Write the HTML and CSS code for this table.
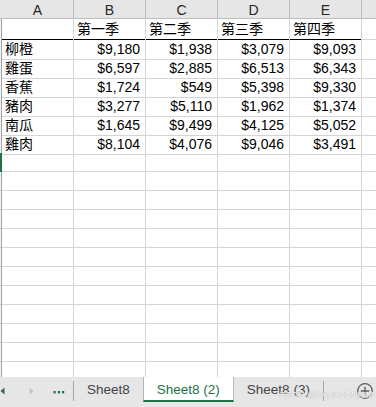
FILE: index.html
```html
<!DOCTYPE html>
<html lang="zh-Hant">
<head>
<meta charset="utf-8">
<link rel="stylesheet" href="styles.css">
</head>
<body>
<div class="book">
  <div class="sheet">
    <div class="row hdr">
      <div class="g"></div><div class="c">A</div><div class="c">B</div><div class="c">C</div><div class="c">D</div><div class="c">E</div><div class="c x"></div>
    </div>
    <div class="row r1">
      <div class="g"></div><div class="c"></div><div class="c">第一季</div><div class="c">第二季</div><div class="c">第三季</div><div class="c">第四季</div><div class="c x"></div>
    </div>
    <div class="row">
      <div class="g"></div><div class="c">柳橙</div><div class="c n">$9,180</div><div class="c n">$1,938</div><div class="c n">$3,079</div><div class="c n">$9,093</div><div class="c x"></div>
    </div>
    <div class="row">
      <div class="g"></div><div class="c">雞蛋</div><div class="c n">$6,597</div><div class="c n">$2,885</div><div class="c n">$6,513</div><div class="c n">$6,343</div><div class="c x"></div>
    </div>
    <div class="row">
      <div class="g"></div><div class="c">香蕉</div><div class="c n">$1,724</div><div class="c n">$549</div><div class="c n">$5,398</div><div class="c n">$9,330</div><div class="c x"></div>
    </div>
    <div class="row">
      <div class="g"></div><div class="c">豬肉</div><div class="c n">$3,277</div><div class="c n">$5,110</div><div class="c n">$1,962</div><div class="c n">$1,374</div><div class="c x"></div>
    </div>
    <div class="row">
      <div class="g"></div><div class="c">南瓜</div><div class="c n">$1,645</div><div class="c n">$9,499</div><div class="c n">$4,125</div><div class="c n">$5,052</div><div class="c x"></div>
    </div>
    <div class="row">
      <div class="g"></div><div class="c">雞肉</div><div class="c n">$8,104</div><div class="c n">$4,076</div><div class="c n">$9,046</div><div class="c n">$3,491</div><div class="c x"></div>
    </div>
    <div class="row sel">
      <div class="g"></div><div class="c"></div><div class="c"></div><div class="c"></div><div class="c"></div><div class="c"></div><div class="c x"></div>
    </div>
    <div class="row">
      <div class="g"></div><div class="c"></div><div class="c"></div><div class="c"></div><div class="c"></div><div class="c"></div><div class="c x"></div>
    </div>
    <div class="row">
      <div class="g"></div><div class="c"></div><div class="c"></div><div class="c"></div><div class="c"></div><div class="c"></div><div class="c x"></div>
    </div>
    <div class="row">
      <div class="g"></div><div class="c"></div><div class="c"></div><div class="c"></div><div class="c"></div><div class="c"></div><div class="c x"></div>
    </div>
    <div class="row">
      <div class="g"></div><div class="c"></div><div class="c"></div><div class="c"></div><div class="c"></div><div class="c"></div><div class="c x"></div>
    </div>
    <div class="row">
      <div class="g"></div><div class="c"></div><div class="c"></div><div class="c"></div><div class="c"></div><div class="c"></div><div class="c x"></div>
    </div>
    <div class="row">
      <div class="g"></div><div class="c"></div><div class="c"></div><div class="c"></div><div class="c"></div><div class="c"></div><div class="c x"></div>
    </div>
    <div class="row">
      <div class="g"></div><div class="c"></div><div class="c"></div><div class="c"></div><div class="c"></div><div class="c"></div><div class="c x"></div>
    </div>
    <div class="row">
      <div class="g"></div><div class="c"></div><div class="c"></div><div class="c"></div><div class="c"></div><div class="c"></div><div class="c x"></div>
    </div>
    <div class="row">
      <div class="g"></div><div class="c"></div><div class="c"></div><div class="c"></div><div class="c"></div><div class="c"></div><div class="c x"></div>
    </div>
    <div class="row">
      <div class="g"></div><div class="c"></div><div class="c"></div><div class="c"></div><div class="c"></div><div class="c"></div><div class="c x"></div>
    </div>
    <div class="row">
      <div class="g"></div><div class="c"></div><div class="c"></div><div class="c"></div><div class="c"></div><div class="c"></div><div class="c x"></div>
    </div>
  </div>

  <div class="tabbar">
    <div class="nav">
      <svg width="73" height="30" viewBox="0 0 73 30">
        <polygon points="0.5,14 4.5,10.5 4.5,17.5" fill="#2b6a40"/>
        <polygon points="29.5,10.5 33.5,14 29.5,17.5" fill="#c4c4c4"/>
        <rect x="53.5" y="14" width="2.2" height="2.4" fill="#217346"/>
        <rect x="57.8" y="14" width="2.2" height="2.4" fill="#217346"/>
        <rect x="62" y="14" width="2.2" height="2.4" fill="#217346"/>
      </svg>
    </div>
    <div class="sep"></div>
    <div class="tab">Sheet8</div>
    <div class="tab active">Sheet8 (2)</div>
    <div class="tab">Sheet8 (3)</div>
    <div class="sep"></div>
    <div class="spacer"></div>
    <svg class="plus" width="18" height="18" viewBox="0 0 18 18">
      <circle cx="9" cy="9" r="7.3" fill="none" stroke="#5c5c5c" stroke-width="1.3"/>
      <path d="M9 4.8 V13.2 M4.8 9 H13.2" stroke="#5c5c5c" stroke-width="1.4"/>
    </svg>
    <div class="wm">CSDN @PAULEENKIM</div>
  </div>
</div>
</body>
</html>
```

FILE: styles.css
```css
html, body {
  margin: 0;
  padding: 0;
  background: #ffffff;
}

body {
  width: 376px;
  height: 407px;
  overflow: hidden;
  font-family: "Liberation Sans", "Noto Sans CJK TC", sans-serif;
}

.book {
  display: flex;
  flex-direction: column;
  width: 376px;
  height: 407px;
}

.sheet {
  height: 377px;
  overflow: hidden;
  flex: none;
}

.row {
  display: grid;
  grid-template-columns: 2px repeat(5, 72px) 1fr;
  height: 19px;
}

.c {
  box-sizing: border-box;
  border-right: 1px solid #d4d4d4;
  border-bottom: 1px solid #d4d4d4;
  padding: 0 5px 0 3px;
  font-size: 14px;
  line-height: 20px;
  color: #000;
  white-space: nowrap;
}

.c.n {
  text-align: right;
}

.c.x {
  border-right: none;
}

.g {
  box-sizing: border-box;
  background: #f2f2f2;
  border-right: 1px solid #a3a3a3;
  border-bottom: 1px solid #c6c6c6;
}

.sel .g {
  background: #217346;
  border-right-color: #217346;
  border-bottom-color: #217346;
}

.hdr {
  background: #e6e6e6;
}

.hdr .g {
  background: #e6e6e6;
  border-right: none;
  border-bottom: 1px solid #bdbdbd;
}

.hdr .c {
  border-right-color: #bfbfbf;
  border-bottom-color: #bdbdbd;
  text-align: center;
  font-size: 14px;
  line-height: 15px;
  padding: 3px 0 0;
  color: #262626;
}

.r1 {
  height: 20px;
}

.r1 .c {
  border-bottom-color: #000;
}

.r1 .c.x {
  border-bottom-color: #d4d4d4;
}

.tabbar {
  position: relative;
  flex: none;
  height: 30px;
  background: #e6e6e6;
  display: flex;
  align-items: flex-start;
}

.nav {
  width: 73px;
  height: 30px;
  flex: none;
}

.nav svg {
  display: block;
}

.sep {
  width: 1px;
  height: 20px;
  margin-top: 4px;
  background: #a6a6a6;
  flex: none;
}

.tab {
  box-sizing: border-box;
  height: 25px;
  padding: 5px 13px 0;
  font-size: 13.5px;
  line-height: 16px;
  color: #444;
  white-space: nowrap;
  border-bottom: 2px solid transparent;
  flex: none;
}

.tab.active {
  background: #ffffff;
  color: #217346;
  border-left: 1px solid #b4b4b4;
  border-right: 1px solid #b4b4b4;
  border-bottom: 2px solid #217346;
}

.spacer {
  flex: 1;
}

.plus {
  display: block;
  margin: 5px 2px 0 0;
  flex: none;
}

.wm {
  position: absolute;
  left: 279px;
  top: 13px;
  font-size: 9px;
  line-height: 10px;
  color: #f4f4f4;
  text-shadow: 0 0 1px #9a9a9a;
  white-space: nowrap;
  pointer-events: none;
}
```
